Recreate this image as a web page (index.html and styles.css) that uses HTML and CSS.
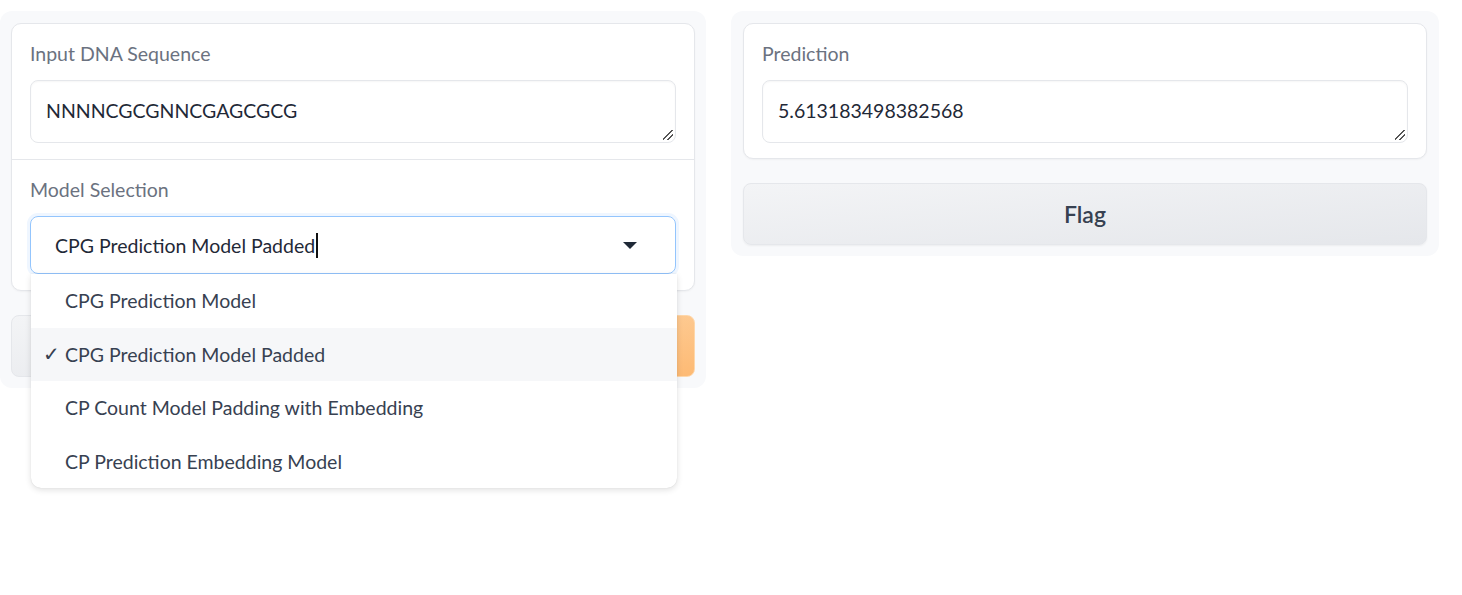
FILE: index.html
```html
<!DOCTYPE html>
<html>
<head>
<meta charset="utf-8">
<link rel="stylesheet" href="styles.css">
</head>
<body>
<div class="app">
  <div class="panel left">
    <div class="card">
      <div class="block first">
        <div class="label">Input DNA Sequence</div>
        <div class="textarea">NNNNCGCGNNCGAGCGCG<span class="grip"></span></div>
      </div>
      <div class="block second">
        <div class="label">Model Selection</div>
        <div class="dropdown">
          <div class="dd-input"><span>CPG Prediction Model Padded</span><span class="caret"></span></div>
          <svg class="arrow" width="14" height="8" viewBox="0 0 14 8"><path d="M0 0 L14 0 L7 7 Z" fill="#1f2937"/></svg>
          <ul class="options">
            <li>CPG Prediction Model</li>
            <li class="selected"><span class="check">✓</span>CPG Prediction Model Padded</li>
            <li>CP Count Model Padding with Embedding</li>
            <li>CP Prediction Embedding Model</li>
          </ul>
        </div>
      </div>
    </div>
    <div class="buttons">
      <div class="btn clear"></div>
      <div class="btn submit"></div>
    </div>
  </div>
  <div class="panel right">
    <div class="card">
      <div class="block first last">
        <div class="label">Prediction</div>
        <div class="textarea">5.613183498382568<span class="grip"></span></div>
      </div>
    </div>
    <div class="btn flag">Flag</div>
  </div>
</div>
</body>
</html>
```

FILE: styles.css
```css
* { box-sizing: border-box; }
html, body { min-height: 595px; }
body {
  margin: 0;
  background: #fff;
  font-family: "Source Sans Pro", Lato, "Liberation Sans", sans-serif;
  color: #1f2937;
}
.app {
  display: grid;
  grid-template-columns: 706px 708px;
  column-gap: 25px;
  align-items: start;
  padding-top: 11px;
}
.panel {
  background: #f8f9fb;
  border-radius: 12px;
  padding: 12px 11px 11px;
  display: flex;
  flex-direction: column;
  gap: 24px;
}
.left.panel { position: relative; z-index: 2; }
.right.panel { padding: 12px 12px 11px; }
.card {
  background: #fff;
  border: 1px solid #e5e7eb;
  border-radius: 10px;
  box-shadow: 0 1px 2px rgba(0,0,0,0.04);
}
.block {
  padding: 17px 18px 16px;
  display: flex;
  flex-direction: column;
  gap: 14px;
}
.block.first { border-bottom: 1px solid #e5e7eb; }
.block.last { border-bottom: none; padding-bottom: 15px; }
.label {
  font-size: 19.5px;
  line-height: 25px;
  color: #6b7280;
}
.textarea {
  position: relative;
  height: 63px;
  border: 1px solid #e5e7eb;
  border-radius: 8px;
  padding: 18px 15px;
  font-size: 19.5px;
  line-height: 24px;
  color: #1f2937;
  box-shadow: inset 0 1px 2px rgba(0,0,0,0.04);
}
.grip {
  position: absolute;
  right: 2px;
  bottom: 2px;
  width: 10px;
  height: 10px;
  background:
    linear-gradient(135deg, transparent 45%, #555 45%, #555 55%, transparent 55%) no-repeat,
    linear-gradient(135deg, transparent 70%, #555 70%, #555 80%, transparent 80%) no-repeat;
}
.dropdown { position: relative; z-index: 5; }
.dd-input {
  height: 58px;
  border: 1px solid #93c5fd;
  border-radius: 8px;
  box-shadow: 0 0 0 3px #eff6ff;
  padding: 0 24px;
  display: flex;
  align-items: center;
  font-size: 19.5px;
  color: #1f2937;
}
.caret {
  display: inline-block;
  width: 1.5px;
  height: 25px;
  background: #111;
  margin-left: 1px;
}
.arrow {
  position: absolute;
  right: 39px;
  top: 26px;
}
.options {
  position: absolute;
  left: 1px;
  right: -1px;
  top: 58px;
  margin: 0;
  padding: 0;
  list-style: none;
  background: #fff;
  border-radius: 0 0 10px 10px;
  box-shadow: 0 2px 6px rgba(0,0,0,0.12), 0 0 1px rgba(0,0,0,0.15);
  z-index: 10;
}
.options li {
  position: relative;
  height: 53.5px;
  display: flex;
  align-items: center;
  padding-left: 34px;
  font-size: 19.5px;
  color: #374151;
}
.options li:last-child { border-radius: 0 0 10px 10px; }
.options li.selected { background: #f6f7f9; }
.check {
  position: absolute;
  left: 12px;
}
.buttons {
  display: flex;
  gap: 16px;
}
.btn {
  height: 62px;
  border-radius: 8px;
  display: flex;
  align-items: center;
  justify-content: center;
  font-size: 23px;
  font-weight: 600;
}
.clear {
  flex: 1;
  background: linear-gradient(to bottom right, #f3f4f6, #e5e7eb);
  border: 1px solid #e5e7eb;
}
.submit {
  flex: 1;
  background: linear-gradient(to bottom right, #fed7aa, #fdba74);
  border: 1px solid #fed7aa;
}
.flag {
  height: 62px;
  background: linear-gradient(to bottom right, #f3f4f6, #e5e7eb);
  border: 1px solid #e5e7eb;
  color: #374151;
  box-shadow: 0 1px 2px rgba(0,0,0,0.05);
}
```
